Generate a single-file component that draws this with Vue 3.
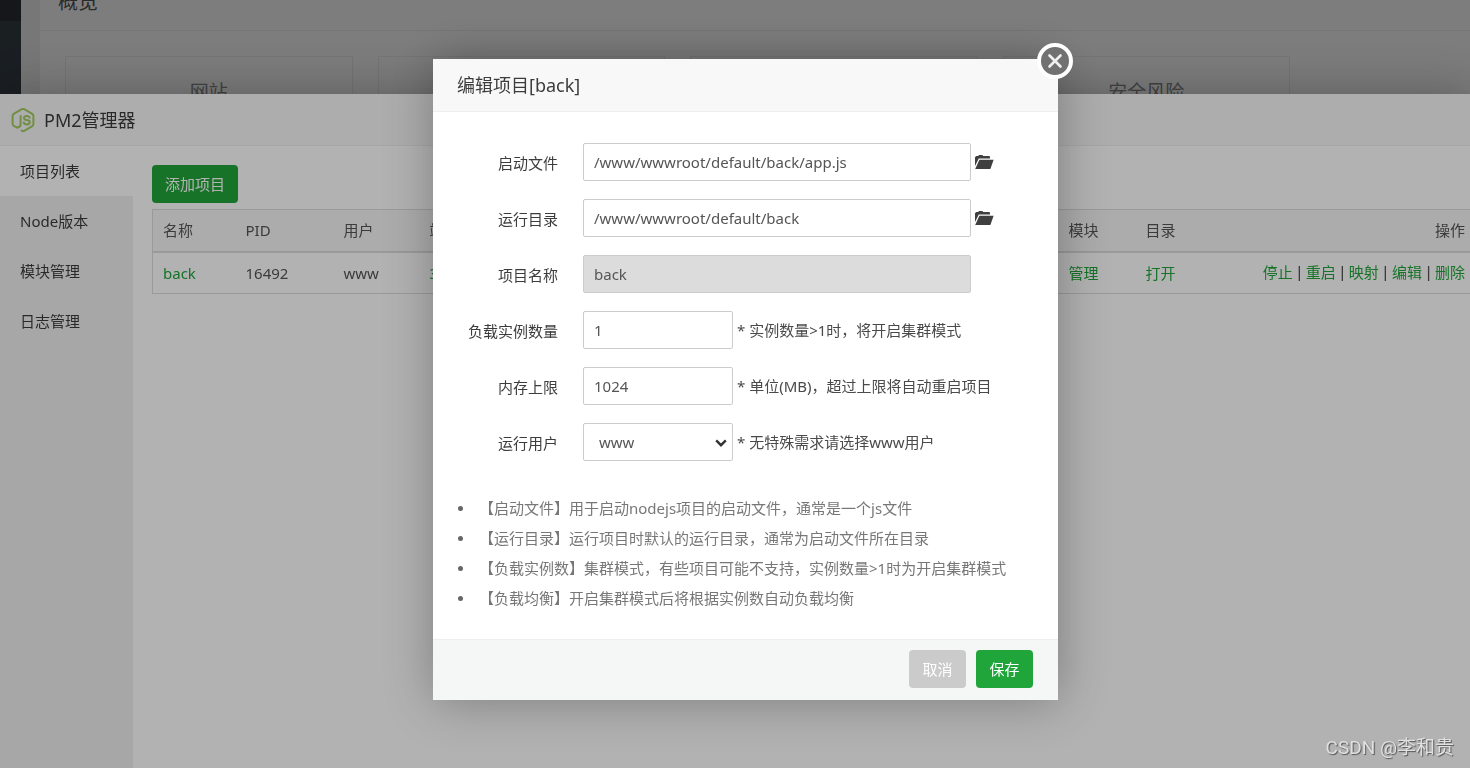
<script setup>
import { ref } from 'vue'

const cards = ['网站', '', '', '安全风险']
const menu = ['项目列表', 'Node版本', '模块管理', '日志管理']
const activeMenu = ref(0)
const actions = ['停止', '重启', '映射', '编辑', '删除']

const form = ref({
  file: '/www/wwwroot/default/back/app.js',
  dir: '/www/wwwroot/default/back',
  name: 'back',
  count: '1',
  memory: '1024',
  user: 'www',
})

const notes = [
  '【启动文件】用于启动nodejs项目的启动文件，通常是一个js文件',
  '【运行目录】运行项目时默认的运行目录，通常为启动文件所在目录',
  '【负载实例数】集群模式，有些项目可能不支持，实例数量>1时为开启集群模式',
  '【负载均衡】开启集群模式后将根据实例数自动负载均衡',
]
</script>

<template>
  <div class="app">
    <div class="page">
      <aside class="page-side"><div class="page-side-top"></div></aside>
      <section class="overview">
        <h2 class="overview-title">概览</h2>
        <div class="cards">
          <div v-for="(c, i) in cards" :key="i" class="card">{{ c }}</div>
        </div>
      </section>
    </div>

    <div class="shade"></div>

    <section class="window">
      <header class="window-head">
        <svg class="node-logo" viewBox="0 0 24 26" fill="none" stroke="#a2cc62" stroke-linejoin="round" stroke-linecap="round">
          <path stroke-width="2" d="M6.4 20.6 L2.7 18.9 Q1.6 18 1.6 16.8 V8.8 Q1.6 7.6 2.7 6.9 L10.8 2.2 Q12 1.6 13.2 2.2 L21.3 6.9 Q22.4 7.6 22.4 8.8 V17.2 Q22.4 18.4 21.3 19.1 L13.2 23.8 Q12 24.4 10.6 23.6" />
          <path stroke-width="2" d="M9.6 9 V17 Q9.6 20.2 6.4 20.6" />
          <path stroke-width="2" d="M18.6 10.8 Q18.2 9 15.8 9 Q13 9 13 11 Q13 12.7 15.9 13.1 Q18.8 13.5 18.8 15.3 Q18.8 17.4 15.9 17.4 Q13 17.4 12.8 15.4" />
        </svg>
        <h1 class="window-title">PM2管理器</h1>
      </header>
      <div class="window-body">
        <nav class="menu">
          <a
            v-for="(m, i) in menu"
            :key="m"
            href="#"
            class="menu-item"
            :class="{ active: i === activeMenu }"
            @click.prevent="activeMenu = i"
          >{{ m }}</a>
        </nav>
        <main class="main">
          <button type="button" class="btn primary">添加项目</button>
          <table class="table">
            <colgroup>
              <col class="c-name" /><col class="c-pid" /><col class="c-user" /><col />
              <col class="c-module" /><col class="c-dir" /><col class="c-ops" />
            </colgroup>
            <thead>
              <tr>
                <th>名称</th><th>PID</th><th>用户</th><th>端口</th><th>模块</th><th>目录</th><th class="right">操作</th>
              </tr>
            </thead>
            <tbody>
              <tr>
                <td><a href="#">back</a></td>
                <td>16492</td>
                <td>www</td>
                <td><a href="#">3000</a></td>
                <td><a href="#">管理</a></td>
                <td><a href="#">打开</a></td>
                <td class="right">
                  <template v-for="(a, i) in actions" :key="a"><span v-if="i" class="sep"> | </span><a href="#">{{ a }}</a></template>
                </td>
              </tr>
            </tbody>
          </table>
        </main>
      </div>
    </section>

    <div class="shade modal-layer">
      <div class="modal" role="dialog" aria-labelledby="modal-title">
        <header class="modal-head"><h2 id="modal-title">编辑项目[back]</h2></header>
        <button type="button" class="close" aria-label="关闭">
          <svg viewBox="0 0 38 38" fill="none">
            <circle cx="19" cy="19" r="16" fill="#717171" stroke="#fff" stroke-width="4" />
            <path d="M13.5 13.5 L24.5 24.5 M24.5 13.5 L13.5 24.5" stroke="#f0f0f0" stroke-width="2.6" stroke-linecap="round" />
          </svg>
        </button>
        <form class="form" @submit.prevent>
          <div class="row">
            <label for="f-file">启动文件</label>
            <input id="f-file" v-model="form.file" type="text" class="wide" />
            <button type="button" class="folder" aria-label="选择文件">
              <svg viewBox="0 0 20 16" fill="#3f3f3f">
                <path d="M1 12 V3.3 L2.2 2.1 H4.2 L5 1.1 H8.4 L9.2 2.1 H15 Q16 2.1 16 3.1 V4.5 H4.8 Z" />
                <path d="M5.4 5.7 H19.6 L16.4 15.1 H1.2 Z" />
              </svg>
            </button>
          </div>
          <div class="row">
            <label for="f-dir">运行目录</label>
            <input id="f-dir" v-model="form.dir" type="text" class="wide" />
            <button type="button" class="folder" aria-label="选择目录">
              <svg viewBox="0 0 20 16" fill="#3f3f3f">
                <path d="M1 12 V3.3 L2.2 2.1 H4.2 L5 1.1 H8.4 L9.2 2.1 H15 Q16 2.1 16 3.1 V4.5 H4.8 Z" />
                <path d="M5.4 5.7 H19.6 L16.4 15.1 H1.2 Z" />
              </svg>
            </button>
          </div>
          <div class="row">
            <label for="f-name">项目名称</label>
            <input id="f-name" v-model="form.name" type="text" class="wide" disabled />
          </div>
          <div class="row">
            <label for="f-count">负载实例数量</label>
            <input id="f-count" v-model="form.count" type="text" />
            <span class="hint">* 实例数量&gt;1时，将开启集群模式</span>
          </div>
          <div class="row">
            <label for="f-memory">内存上限</label>
            <input id="f-memory" v-model="form.memory" type="text" />
            <span class="hint">* 单位(MB)，超过上限将自动重启项目</span>
          </div>
          <div class="row">
            <label for="f-user">运行用户</label>
            <div class="select">
              <select id="f-user" v-model="form.user"><option>www</option></select>
              <svg viewBox="0 0 12 8" fill="none" stroke="#333" stroke-width="2.4">
                <path d="M1.2 1.4 L6 6.2 L10.8 1.4" />
              </svg>
            </div>
            <span class="hint">* 无特殊需求请选择www用户</span>
          </div>
        </form>
        <ul class="notes">
          <li v-for="n in notes" :key="n">{{ n }}</li>
        </ul>
        <footer class="modal-foot">
          <button type="button" class="btn cancel">取消</button>
          <button type="button" class="btn primary">保存</button>
        </footer>
      </div>
    </div>

    <div class="watermark">CSDN @李和贵</div>
  </div>
</template>

<style>
body {
  margin: 0;
  overflow: hidden;
}
</style>

<style scoped>
.app {
  font-family: "Noto Sans", "Noto Sans CJK SC", sans-serif;
  font-size: 15px;
  line-height: 20px;
  color: #555;
  height: 100vh;
  overflow: hidden;
}
.app * {
  box-sizing: border-box;
}
h1,
h2 {
  margin: 0;
  font-weight: 400;
  font-size: 18px;
  line-height: 24px;
  color: #3c3c3c;
}
a {
  color: #20a53a;
  text-decoration: none;
}
button,
input,
select {
  font: inherit;
}

.page {
  display: flex;
  height: 100vh;
  background: #f2f2f2;
}
.page-side {
  width: 21px;
  margin-right: 19px;
  background: #363f47;
}
.page-side-top {
  height: 21px;
  background: #2c2f35;
}
.overview {
  flex: 1;
  background: #fff;
}
.overview-title {
  height: 31px;
  padding-left: 18px;
  font-size: 20px;
  line-height: 4px;
  color: #555;
  border-bottom: 1px solid #eee;
}
.cards {
  display: grid;
  grid-template-columns: repeat(4, 1fr);
  gap: 25px;
  padding: 25px 180px 0 25px;
}
.card {
  height: 120px;
  padding-top: 21px;
  font-size: 19px;
  line-height: 28px;
  text-align: center;
  color: #888;
  border: 1px solid #eee;
}

.shade {
  position: fixed;
  inset: 0;
  background: rgba(0, 0, 0, 0.3);
}

.window {
  position: fixed;
  top: 94px;
  right: -6px;
  bottom: 0;
  left: 0;
  display: flex;
  flex-direction: column;
  background: #fff;
  box-shadow: 1px 1px 50px rgba(0, 0, 0, 0.3);
}
.window-head {
  display: flex;
  align-items: center;
  gap: 9px;
  height: 52px;
  padding-left: 11px;
  background: #f8f8f8;
  border-bottom: 1px solid #eee;
}
.node-logo {
  width: 24px;
  height: 26px;
}
.window-body {
  flex: 1;
  display: flex;
}
.menu {
  width: 133px;
  background: #f0f0f0;
}
.menu-item {
  display: block;
  padding-left: 20px;
  line-height: 50px;
  color: #3c3c3c;
}
.menu-item.active {
  background: #fff;
}
.main {
  flex: 1;
  padding: 19px 0 0 19px;
}
.btn {
  min-width: 57px;
  height: 38px;
  padding: 0 13px;
  color: #fff;
  border: 0;
  border-radius: 4px;
}
.primary {
  background: #20a53a;
}
.cancel {
  background: #cbcbcb;
}
.table {
  width: 100%;
  margin-top: 6px;
  table-layout: fixed;
  border-collapse: collapse;
  border: 1px solid #ddd;
}
.table th,
.table td {
  height: 42px;
  padding: 0 10px;
  font-weight: 400;
  text-align: left;
  white-space: nowrap;
}
.table th {
  background: #f6f6f6;
  border-bottom: 2px solid #ddd;
}
.table .right {
  text-align: right;
}
.sep {
  font-family: "Liberation Sans", sans-serif;
  font-size: 16px;
  white-space: pre;
}
.c-name { width: 83px; }
.c-pid { width: 98px; }
.c-user { width: 86px; }
.c-module { width: 77px; }
.c-dir { width: 77px; }
.c-ops { width: 263px; }

.modal-layer {
  display: flex;
  justify-content: center;
  align-items: flex-start;
  padding: 59px 0 0 21px;
}
.modal {
  position: relative;
  width: 625px;
  background: #fff;
  border-radius: 2px;
  box-shadow: 1px 1px 50px rgba(0, 0, 0, 0.3);
}
.modal-head {
  padding: 14px 24px;
  background: #f8f8f8;
  border-bottom: 1px solid #eee;
}
.close {
  position: absolute;
  top: -17px;
  right: -16px;
  width: 38px;
  height: 38px;
  padding: 0;
  border: 0;
  background: none;
}
.close svg {
  display: block;
}
.form {
  display: flex;
  flex-direction: column;
  gap: 18px;
  padding: 31px 0 32px;
}
.row {
  display: flex;
  align-items: center;
}
.row label {
  width: 125px;
  margin-right: 25px;
  padding-top: 2px;
  text-align: right;
  color: #3c3c3c;
}
.row input,
.row select {
  display: block;
  width: 150px;
  height: 38px;
  padding: 0 10px;
  color: #555;
  background: #fff;
  border: 1px solid #ccc;
  border-radius: 2px;
}
.select {
  position: relative;
}
.row select {
  padding-left: 15px;
  appearance: none;
}
.select svg {
  position: absolute;
  top: 16px;
  right: 6px;
  width: 12px;
  height: 8px;
  pointer-events: none;
}
.row input.wide {
  width: 388px;
}
.row input:disabled {
  background: #dcdcdc;
}
.folder {
  width: 20px;
  height: 16px;
  margin-left: 3px;
  padding: 0;
  border: 0;
  background: none;
}
.folder svg {
  display: block;
}
.hint {
  margin-left: 4px;
  color: #4a4a4a;
}
.notes {
  margin: 0;
  padding: 0 25px 26px;
  list-style: none;
  color: #777;
}
.notes li {
  display: flex;
  align-items: center;
  gap: 16px;
  line-height: 30px;
}
.notes li::before {
  content: "";
  width: 5px;
  height: 5px;
  margin-top: 1px;
  border-radius: 50%;
  background: #666;
}
.modal-foot {
  display: flex;
  justify-content: flex-end;
  gap: 10px;
  padding: 10px 25px 12px;
  background: #f5f7f7;
  border-top: 1px solid #eee;
}
.watermark {
  position: fixed;
  right: 16px;
  bottom: 7px;
  font-family: Roboto, "Noto Sans CJK SC", sans-serif;
  font-size: 19px;
  line-height: 26px;
  color: #e0e0e0;
  text-shadow: 1px 1px 1px #555;
}
</style>
